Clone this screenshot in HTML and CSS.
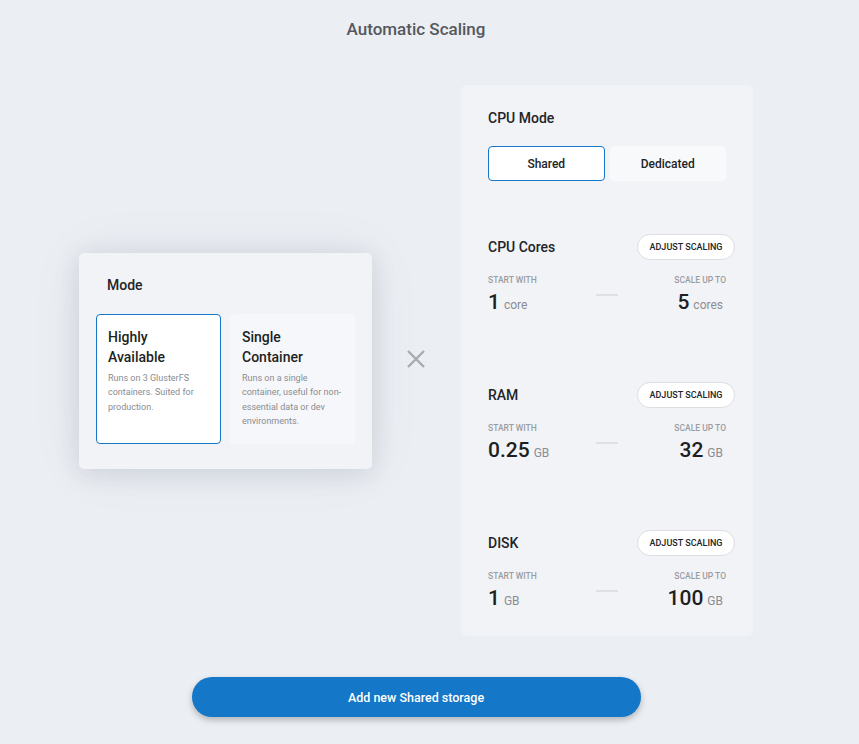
FILE: index.html
```html
<!DOCTYPE html>
<html>
<head>
<meta charset="utf-8">
<link rel="stylesheet" href="styles.css">
</head>
<body>
<div class="page">
  <h1 class="title">Automatic Scaling</h1>
  <div class="row">
    <div class="mode-card">
      <div class="mode-label">Mode</div>
      <div class="options">
        <div class="option selected">
          <div class="opt-title">Highly Available</div>
          <div class="opt-desc">Runs on 3 GlusterFS containers. Suited for production.</div>
        </div>
        <div class="option">
          <div class="opt-title">Single Container</div>
          <div class="opt-desc">Runs on a single container, useful for non-essential data or dev environments.</div>
        </div>
      </div>
    </div>
    <div class="times">
      <svg width="20" height="20" viewBox="0 0 20 20"><path d="M2 2 L18 18 M18 2 L2 18" stroke="#a9abae" stroke-width="2.4" fill="none"/></svg>
    </div>
    <div class="panel">
      <div class="panel-label">CPU Mode</div>
      <div class="segmented">
        <div class="seg active">Shared</div>
        <div class="seg">Dedicated</div>
      </div>

      <div class="section first">
        <div class="sec-head">
          <div class="sec-title">CPU Cores</div>
          <div class="adjust">ADJUST SCALING</div>
        </div>
        <div class="range">
          <div class="col">
            <div class="cap">START WITH</div>
            <div class="val"><span class="num">1</span><span class="unit">core</span></div>
          </div>
          <div class="dash"></div>
          <div class="col right">
            <div class="cap">SCALE UP TO</div>
            <div class="val"><span class="num">5</span><span class="unit">cores</span></div>
          </div>
        </div>
      </div>

      <div class="section">
        <div class="sec-head">
          <div class="sec-title">RAM</div>
          <div class="adjust">ADJUST SCALING</div>
        </div>
        <div class="range">
          <div class="col">
            <div class="cap">START WITH</div>
            <div class="val"><span class="num">0.25</span><span class="unit">GB</span></div>
          </div>
          <div class="dash"></div>
          <div class="col right">
            <div class="cap">SCALE UP TO</div>
            <div class="val"><span class="num">32</span><span class="unit">GB</span></div>
          </div>
        </div>
      </div>

      <div class="section">
        <div class="sec-head">
          <div class="sec-title">DISK</div>
          <div class="adjust">ADJUST SCALING</div>
        </div>
        <div class="range">
          <div class="col">
            <div class="cap">START WITH</div>
            <div class="val"><span class="num">1</span><span class="unit">GB</span></div>
          </div>
          <div class="dash"></div>
          <div class="col right">
            <div class="cap">SCALE UP TO</div>
            <div class="val"><span class="num">100</span><span class="unit">GB</span></div>
          </div>
        </div>
      </div>
    </div>
  </div>
  <div class="cta-wrap">
    <button class="cta">Add new Shared storage</button>
  </div>
</div>
</body>
</html>
```

FILE: styles.css
```css
* { box-sizing: border-box; }
html, body { margin: 0; padding: 0; }
body {
  background: #ebeef3;
  font-family: Roboto, "Noto Sans", sans-serif;
  color: #222428;
  width: 859px;
  height: 744px;
  overflow: hidden;
}
.page {
  width: 832px;
  display: flex;
  flex-direction: column;
  align-items: center;
}
.title {
  margin: 19px 0 0;
  font-size: 17px;
  line-height: 20px;
  font-weight: 500;
  color: #55585d;
}
.row {
  margin-top: 46px;
  display: flex;
  align-items: center;
}
.mode-card {
  width: 293px;
  background: #f2f3f7;
  border-radius: 5px;
  padding: 24px 17px 25px;
  box-shadow: 0 4px 26px rgba(40, 50, 70, 0.13), 0 0 60px rgba(40, 50, 70, 0.05);
}
.mode-label {
  font-size: 14px;
  line-height: 17px;
  font-weight: 500;
  margin-left: 11px;
}
.options {
  margin-top: 20px;
  display: flex;
  gap: 9px;
}
.option {
  width: 125px;
  height: 130px;
  border-radius: 4px;
  background: #f6f7fa;
  padding: 12px 15px 0 11px;
  border: 1px solid transparent;
}
.option.selected {
  background: #ffffff;
  border-color: #1677c8;
}
.opt-title {
  font-size: 14px;
  line-height: 20px;
  font-weight: 500;
  color: #1d1f22;
}
.opt-desc {
  margin-top: 4px;
  margin-right: -4px;
  font-size: 9px;
  line-height: 14.5px;
  color: #8a8c90;
}
.times {
  width: 20px;
  height: 20px;
  margin: -4px 35px 0 34px;
  display: flex;
}
.panel {
  width: 292px;
  background: #f2f3f7;
  border-radius: 6px;
  padding: 25px 27px 26px;
}
.panel-label {
  font-size: 14px;
  line-height: 17px;
  font-weight: 500;
}
.segmented {
  margin-top: 19px;
  display: flex;
  gap: 5px;
}
.seg {
  flex: 1;
  height: 35px;
  border-radius: 4px;
  background: #f8f9fb;
  border: 1px solid transparent;
  display: flex;
  align-items: center;
  justify-content: center;
  font-size: 12px;
  font-weight: 500;
  color: #222428;
}
.seg.active {
  background: #ffffff;
  border-color: #1677c8;
}
.section { margin-top: 68px; }
.section.first { margin-top: 53px; }
.sec-head {
  display: flex;
  justify-content: space-between;
  align-items: center;
  margin-right: -9px;
}
.sec-title {
  font-size: 14px;
  font-weight: 500;
  line-height: 17px;
}
.adjust {
  width: 98px;
  height: 26px;
  border-radius: 13px;
  background: #ffffff;
  border: 1px solid #dcdee2;
  display: flex;
  align-items: center;
  justify-content: center;
  font-size: 9px;
  font-weight: 500;
  color: #222428;
}
.range {
  margin-top: 15px;
  display: grid;
  grid-template-columns: 1fr auto 1fr;
  align-items: center;
}
.col { display: flex; flex-direction: column; align-items: flex-start; }
.col.right { align-items: flex-end; }
.cap {
  font-size: 8.5px;
  line-height: 10px;
  font-weight: 500;
  color: #9a9ca0;
}
.val {
  margin-top: 5px;
  line-height: 24px;
  height: 24px;
  display: flex;
  align-items: baseline;
}
.num {
  font-size: 21px;
  font-weight: 500;
  color: #1d1f22;
}
.unit {
  font-size: 12px;
  color: #8a8c90;
  margin-left: 4px;
}
.col.right .val { margin-right: 3px; }
.dash {
  width: 22px;
  height: 2px;
  background: #dfe0e4;
  margin-top: 1px;
}
.cta-wrap {
  margin-top: 41px;
  display: flex;
  justify-content: center;
}
.cta {
  width: 449px;
  height: 40px;
  border: none;
  border-radius: 20px;
  background: #1477c7;
  color: #ffffff;
  font-family: Roboto, "Noto Sans", sans-serif;
  font-size: 12.5px;
  font-weight: 500;
  box-shadow: 0 3px 6px rgba(0, 0, 0, 0.25);
}
```
